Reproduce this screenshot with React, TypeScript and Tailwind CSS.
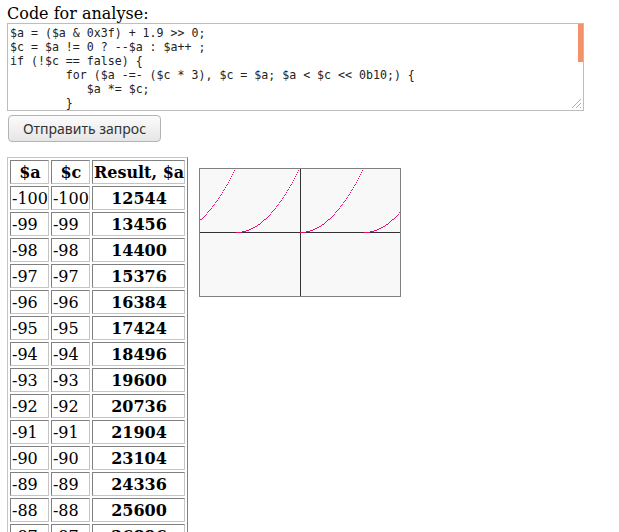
const code = [
    "$a = ($a & 0x3f) + 1.9 >> 0;",
    "$c = $a != 0 ? --$a : $a++ ;",
    "if (!$c == false) {",
    "        for ($a -=- ($c * 3), $c = $a; $a < $c << 0b10;) {",
    "           $a *= $c;",
    "        }",
    "}",
    "echo $a;",
].join("\n");

const calc = (a: number) => 16 * (a & 63) * (a & 63);

const rows: number[] = [];
for (let a = -100; a <= -87; a++) rows.push(a);

const points: number[] = [];
for (let a = -100; a <= 100; a++) points.push(a);

const cell = "pl-px pr-0 pt-[2px] pb-0 leading-[20px] border border-t-[#808080] border-l-[#808080] border-r-[#c4c4c4] border-b-[#c4c4c4]";

const Chart = () => (
    <div className="mt-[11px] ml-[11px] border border-[#808080] bg-[#f8f8f8]">
        <svg width="200" height="127" className="block">
            <rect x="0" y="63" width="200" height="1" fill="#333" />
            <rect x="100" y="0" width="1" height="127" fill="#333" />
            {points.map((a) => {
                const y = Math.round(63 - calc(a) / 1000);
                if (y < 0) return null;
                return <rect key={a} x={100 + a} y={y} width="1" height="1" fill="#e0106e" />;
            })}
        </svg>
    </div>
);

export default function App() {
    return (
        <div className="px-[7px] pt-[4px] bg-white h-[532px] overflow-hidden font-['DejaVu_Serif',serif] text-black">
            <div className="text-[16px] leading-[19px]">Code for analyse:</div>

            {/* Code box */}
            <div className="relative w-[577px] h-[88px]">
                <textarea
                    readOnly
                    value={code}
                    className="block w-full h-full resize-none overflow-hidden border border-[#bdbdbd] px-[2px] py-[2px] font-['DejaVu_Sans_Mono',monospace] text-[11.6px] leading-[14px] text-[#222] outline-none whitespace-pre"
                />
                <div className="absolute top-px right-px w-[5px] h-[38px] bg-[#f39268]"></div>
                <svg className="absolute bottom-[2px] right-[2px]" width="12" height="12" viewBox="0 0 12 12">
                    <path d="M11 2 L2 11 M11 6 L6 11 M11 10 L10 11" stroke="#b0b0b0" strokeWidth="1" />
                </svg>
            </div>

            <button className="mt-[4px] ml-px h-[27px] w-[153px] rounded-[4px] border border-[#b4b4b4] bg-gradient-to-b from-[#fbfbfb] to-[#e6e6e6] font-['Noto_Sans',sans-serif] text-[14px] text-[#333]">
                Отправить запрос
            </button>

            <div className="flex items-start mt-[15px]">
                <table className="border-separate border-spacing-[2px] border border-t-[#c4c4c4] border-l-[#c4c4c4] border-r-[#808080] border-b-[#808080] text-[16px]">
                    <thead>
                        <tr>
                            <th className={cell}>$a</th>
                            <th className={cell}>$c</th>
                            <th className={cell}>Result, $a</th>
                        </tr>
                    </thead>
                    <tbody>
                        {rows.map((a) => (
                            <tr key={a}>
                                <td className={cell}>{a}</td>
                                <td className={cell}>{a}</td>
                                <td className={cell + " text-center font-bold"}>{calc(a)}</td>
                            </tr>
                        ))}
                    </tbody>
                </table>
                <Chart />
            </div>
        </div>
    );
}
